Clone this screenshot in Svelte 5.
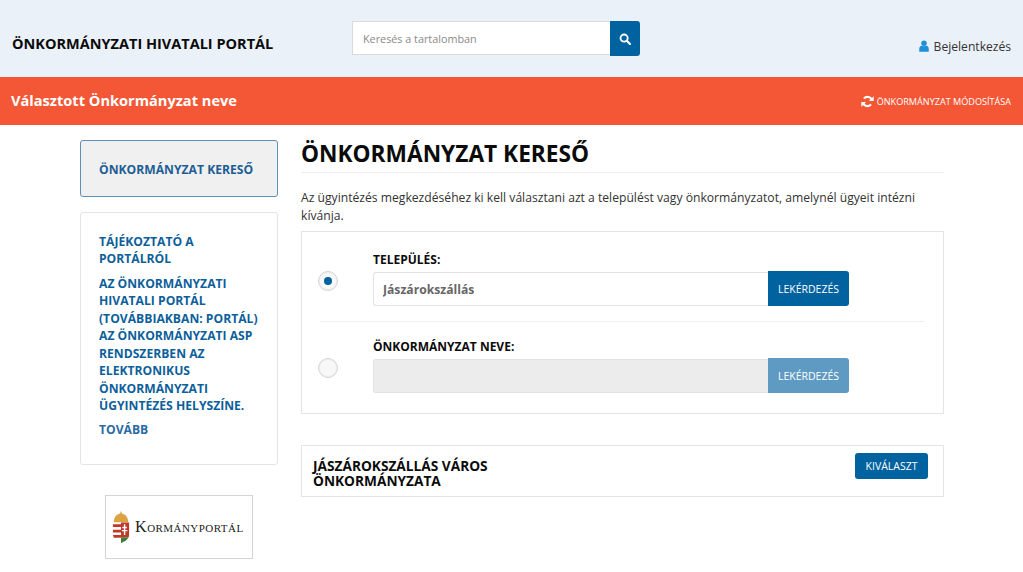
<script>
  let selected = $state("telepules");
  let telepules = $state("Jászárokszállás");
</script>

<header class="top">
  <div class="brand">ÖNKORMÁNYZATI HIVATALI PORTÁL</div>
  <div class="search">
    <input type="text" placeholder="Keresés a tartalomban" />
    <button class="search-btn" aria-label="Keresés">
      <svg viewBox="0 0 16 16" width="12" height="12">
        <circle cx="6.8" cy="6.8" r="4.8" fill="none" stroke="#fff" stroke-width="2.4" />
        <path d="M10.4 10.4 L14.6 14.6" stroke="#fff" stroke-width="2.8" stroke-linecap="round" />
      </svg>
    </button>
  </div>
  <div class="login">
    <svg viewBox="0 0 12 14" width="10" height="12">
      <circle cx="6" cy="3.6" r="3.3" fill="#1f8fd6" />
      <path d="M0.3 14 V10.2 C0.3 8 1.8 6.8 3.4 6.4 C4.8 7.6 7.2 7.6 8.6 6.4 C10.2 6.8 11.7 8 11.7 10.2 V14 Z" fill="#1f8fd6" />
    </svg>
    <span>Bejelentkezés</span>
  </div>
</header>

<div class="selected-bar">
  <div class="selected-name">Választott Önkormányzat neve</div>
  <div class="change">
    <svg viewBox="0 0 16 16" width="13" height="13">
      <path d="M13.4 6.4 A5.6 5.6 0 0 0 3.6 4.4" fill="none" stroke="#fff" stroke-width="2.6" />
      <path d="M15.6 1.6 V7.4 H9.8 Z" fill="#fff" />
      <path d="M2.6 9.6 A5.6 5.6 0 0 0 12.4 11.6" fill="none" stroke="#fff" stroke-width="2.6" />
      <path d="M0.4 14.4 V8.6 H6.2 Z" fill="#fff" />
    </svg>
    <span>ÖNKORMÁNYZAT MÓDOSÍTÁSA</span>
  </div>
</div>

<div class="page">
  <aside class="side">
    <div class="side-active">ÖNKORMÁNYZAT KERESŐ</div>
    <div class="side-box">
      <p class="info-title">TÁJÉKOZTATÓ A PORTÁLRÓL</p>
      <p class="info-text">AZ ÖNKORMÁNYZATI HIVATALI PORTÁL (TOVÁBBIAKBAN: PORTÁL) AZ ÖNKORMÁNYZATI ASP RENDSZERBEN AZ ELEKTRONIKUS ÖNKORMÁNYZATI ÜGYINTÉZÉS HELYSZÍNE.</p>
      <p class="more">TOVÁBB</p>
    </div>
    <div class="gov-logo">
      <svg viewBox="0 0 20 36" width="18" height="34">
        <path d="M10 0 L11 3 C15 4 18 7 18 13 H2 C2 7 5 4 9 3 Z" fill="#d9a441" />
        <path d="M1 13 H19 V27 C19 32 14 34 10 36 C6 34 1 32 1 27 Z" fill="#fff" />
        <path d="M1 15 H10 V18 H1 Z M1 21 H10 V24 H1 Z M1 27 H10 V30 H2 Z" fill="#c0392b" />
        <path d="M10 13 H19 V27 C19 28 18.8 29 18.4 29.5 H10 Z" fill="#c0392b" />
        <path d="M14 15 V27 M11.5 18.5 H16.5 M11 22 H17" stroke="#fff" stroke-width="1.6" />
        <path d="M10 29.5 H18.4 C17 33 13 34.6 10 36 Z" fill="#3f7d3a" />
      </svg>
      <span class="gov-text">Kormányportál</span>
    </div>
  </aside>

  <main class="content">
    <h1>ÖNKORMÁNYZAT KERESŐ</h1>
    <p class="intro">Az ügyintézés megkezdéséhez ki kell választani azt a települést vagy önkormányzatot, amelynél ügyeit intézni kívánja.</p>

    <section class="form-box">
      <div class="form-row first">
        <button class="radio" class:on={selected === "telepules"} onclick={() => (selected = "telepules")} aria-label="Település"></button>
        <div class="field">
          <div class="field-label">TELEPÜLÉS:</div>
          <div class="input-group">
            <input class="text-input" type="text" bind:value={telepules} />
            <button class="query">LEKÉRDEZÉS</button>
          </div>
        </div>
      </div>
      <div class="form-row second">
        <button class="radio" class:on={selected === "nev"} onclick={() => (selected = "nev")} aria-label="Önkormányzat neve"></button>
        <div class="field">
          <div class="field-label">ÖNKORMÁNYZAT NEVE:</div>
          <div class="input-group">
            <input class="text-input" type="text" disabled />
            <button class="query" disabled>LEKÉRDEZÉS</button>
          </div>
        </div>
      </div>
    </section>

    <section class="result">
      <div class="result-name">JÁSZÁROKSZÁLLÁS VÁROS ÖNKORMÁNYZATA</div>
      <button class="pick">KIVÁLASZT</button>
    </section>
  </main>
</div>

<style>
  :global(body) {
    margin: 0;
    background: #fff;
    font-family: "Open Sans", "Noto Sans", sans-serif;
    color: #333;
  }

  button {
    font-family: inherit;
    cursor: pointer;
  }

  .top {
    height: 77px;
    box-sizing: border-box;
    background: #ebf1f9;
    display: flex;
    padding: 21px 12px 0 12px;
  }

  .brand {
    width: 340px;
    padding-top: 13px;
    font-size: 14.5px;
    line-height: 20px;
    font-weight: 700;
    color: #0b0b0b;
  }

  .search {
    display: flex;
    width: 288px;
    height: 35px;
  }

  .search input {
    flex: 1;
    min-width: 0;
    box-sizing: border-box;
    height: 34px;
    border: 1px solid #d9d9d9;
    border-right: 0;
    padding: 0 10px;
    font-family: inherit;
    font-size: 10.8px;
    background: #fff;
    outline: none;
  }

  .search input::placeholder {
    color: #8a8a8a;
    opacity: 1;
  }

  .search-btn {
    width: 30px;
    height: 35px;
    border: 0;
    padding: 0;
    background: #00629f;
    border-radius: 0 3px 3px 0;
    display: flex;
    align-items: center;
    justify-content: center;
  }

  .login {
    margin-left: auto;
    padding-top: 15px;
    height: 20px;
    display: flex;
    align-items: center;
    gap: 5px;
    font-size: 12.1px;
    color: #333;
  }

  .selected-bar {
    height: 48px;
    background: #f45735;
    display: flex;
    align-items: center;
    justify-content: space-between;
    padding: 0 12px 0 11px;
    color: #fff;
  }

  .selected-name {
    font-size: 14.6px;
    font-weight: 700;
    margin-top: -3px;
  }

  .change {
    display: flex;
    align-items: center;
    gap: 3px;
    font-size: 9.1px;
    margin-top: 1px;
  }

  .page {
    display: flex;
    gap: 23px;
    padding: 15px 79px 0 80px;
    align-items: flex-start;
  }

  .side {
    width: 198px;
    flex: none;
  }

  .side-active {
    box-sizing: border-box;
    height: 57px;
    background: #f0f0f0;
    border: 1px solid #5f8fb8;
    border-radius: 3px;
    padding: 1px 18px 0;
    display: flex;
    align-items: center;
    font-size: 12.15px;
    font-weight: 700;
    color: #1d5e94;
  }

  .side-box {
    box-sizing: border-box;
    height: 253px;
    margin-top: 15px;
    border: 1px solid #e4e4e4;
    border-radius: 3px;
    padding: 19.5px 18px 0;
    color: #0d5f9b;
    font-size: 12.15px;
    font-weight: 700;
    line-height: 17.5px;
  }

  .side-box p {
    margin: 0 0 7px;
  }

  .side-box .more {
    margin-top: -1px;
    color: #2a6aa5;
  }

  .gov-logo {
    box-sizing: border-box;
    width: 148px;
    height: 64px;
    margin: 30px 0 0 25px;
    border: 1px solid #d4d4d4;
    display: flex;
    align-items: center;
    gap: 5px;
    padding: 0 6px;
  }

  .gov-text {
    font-family: "Liberation Serif", serif;
    font-variant: small-caps;
    font-size: 16.2px;
    letter-spacing: 0.45px;
    color: #222;
    white-space: nowrap;
  }

  .content {
    flex: 1;
    min-width: 0;
  }

  h1 {
    margin: 0;
    padding: 1px 0 5px;
    font-size: 22.7px;
    line-height: 26px;
    font-weight: 700;
    color: #0b0b0b;
    border-bottom: 1px solid #eee;
  }

  .intro {
    margin: 16px 0 6px;
    font-size: 12.15px;
    line-height: 18px;
    color: #333;
  }

  .form-box {
    box-sizing: border-box;
    height: 183px;
    border: 1px solid #e4e4e4;
    padding: 0 19px 0 18px;
  }

  .form-row {
    display: flex;
    align-items: flex-start;
  }

  .first {
    height: 90px;
    border-bottom: 1px solid #f0f0f0;
    padding-top: 19px;
    box-sizing: border-box;
  }

  .second {
    padding-top: 16px;
  }

  .radio {
    flex: none;
    width: 20px;
    height: 20px;
    margin: 20px 0 0 -2px;
    padding: 0;
    border-radius: 50%;
    border: 1px solid #d6d6d6;
    background: #f8f8f8;
    box-shadow: inset 0 0 0 1px #eee;
    position: relative;
  }

  .radio.on::after {
    content: "";
    position: absolute;
    left: 5px;
    top: 5px;
    width: 8px;
    height: 8px;
    border-radius: 50%;
    background: #00629f;
  }

  .field {
    margin-left: 35px;
  }

  .field-label {
    font-size: 12px;
    line-height: 17px;
    font-weight: 700;
    color: #0b0b0b;
    margin-bottom: 4px;
  }

  .input-group {
    display: flex;
    align-items: flex-start;
  }

  .text-input {
    box-sizing: border-box;
    width: 395px;
    height: 34px;
    border: 1px solid #e2e2e2;
    border-right: 0;
    border-radius: 3px 0 0 3px;
    padding: 0 9px;
    font-family: inherit;
    font-size: 12.15px;
    font-weight: 700;
    color: #666;
    background: #fff;
    outline: none;
  }

  .text-input:disabled {
    background: #ececec;
  }

  .query {
    box-sizing: border-box;
    width: 81px;
    height: 35px;
    margin-top: -1px;
    border: 0;
    border-radius: 0 3px 3px 0;
    background: #00629f;
    color: #fff;
    font-size: 10.5px;
    padding: 0;
  }

  .query:disabled {
    background: #5f9ac2;
    cursor: default;
  }

  .result {
    box-sizing: border-box;
    height: 52px;
    margin-top: 31px;
    border: 1px solid #e4e4e4;
    padding: 7px 15px 0 11px;
    display: flex;
    justify-content: space-between;
    align-items: flex-start;
  }

  .result-name {
    width: 215px;
    padding-top: 5px;
    font-size: 13.7px;
    line-height: 15px;
    font-weight: 700;
    color: #0b0b0b;
  }

  .pick {
    box-sizing: border-box;
    width: 73px;
    height: 26px;
    border: 0;
    border-radius: 3px;
    background: #00629f;
    color: #fff;
    font-size: 10.5px;
    padding: 0;
  }
</style>
